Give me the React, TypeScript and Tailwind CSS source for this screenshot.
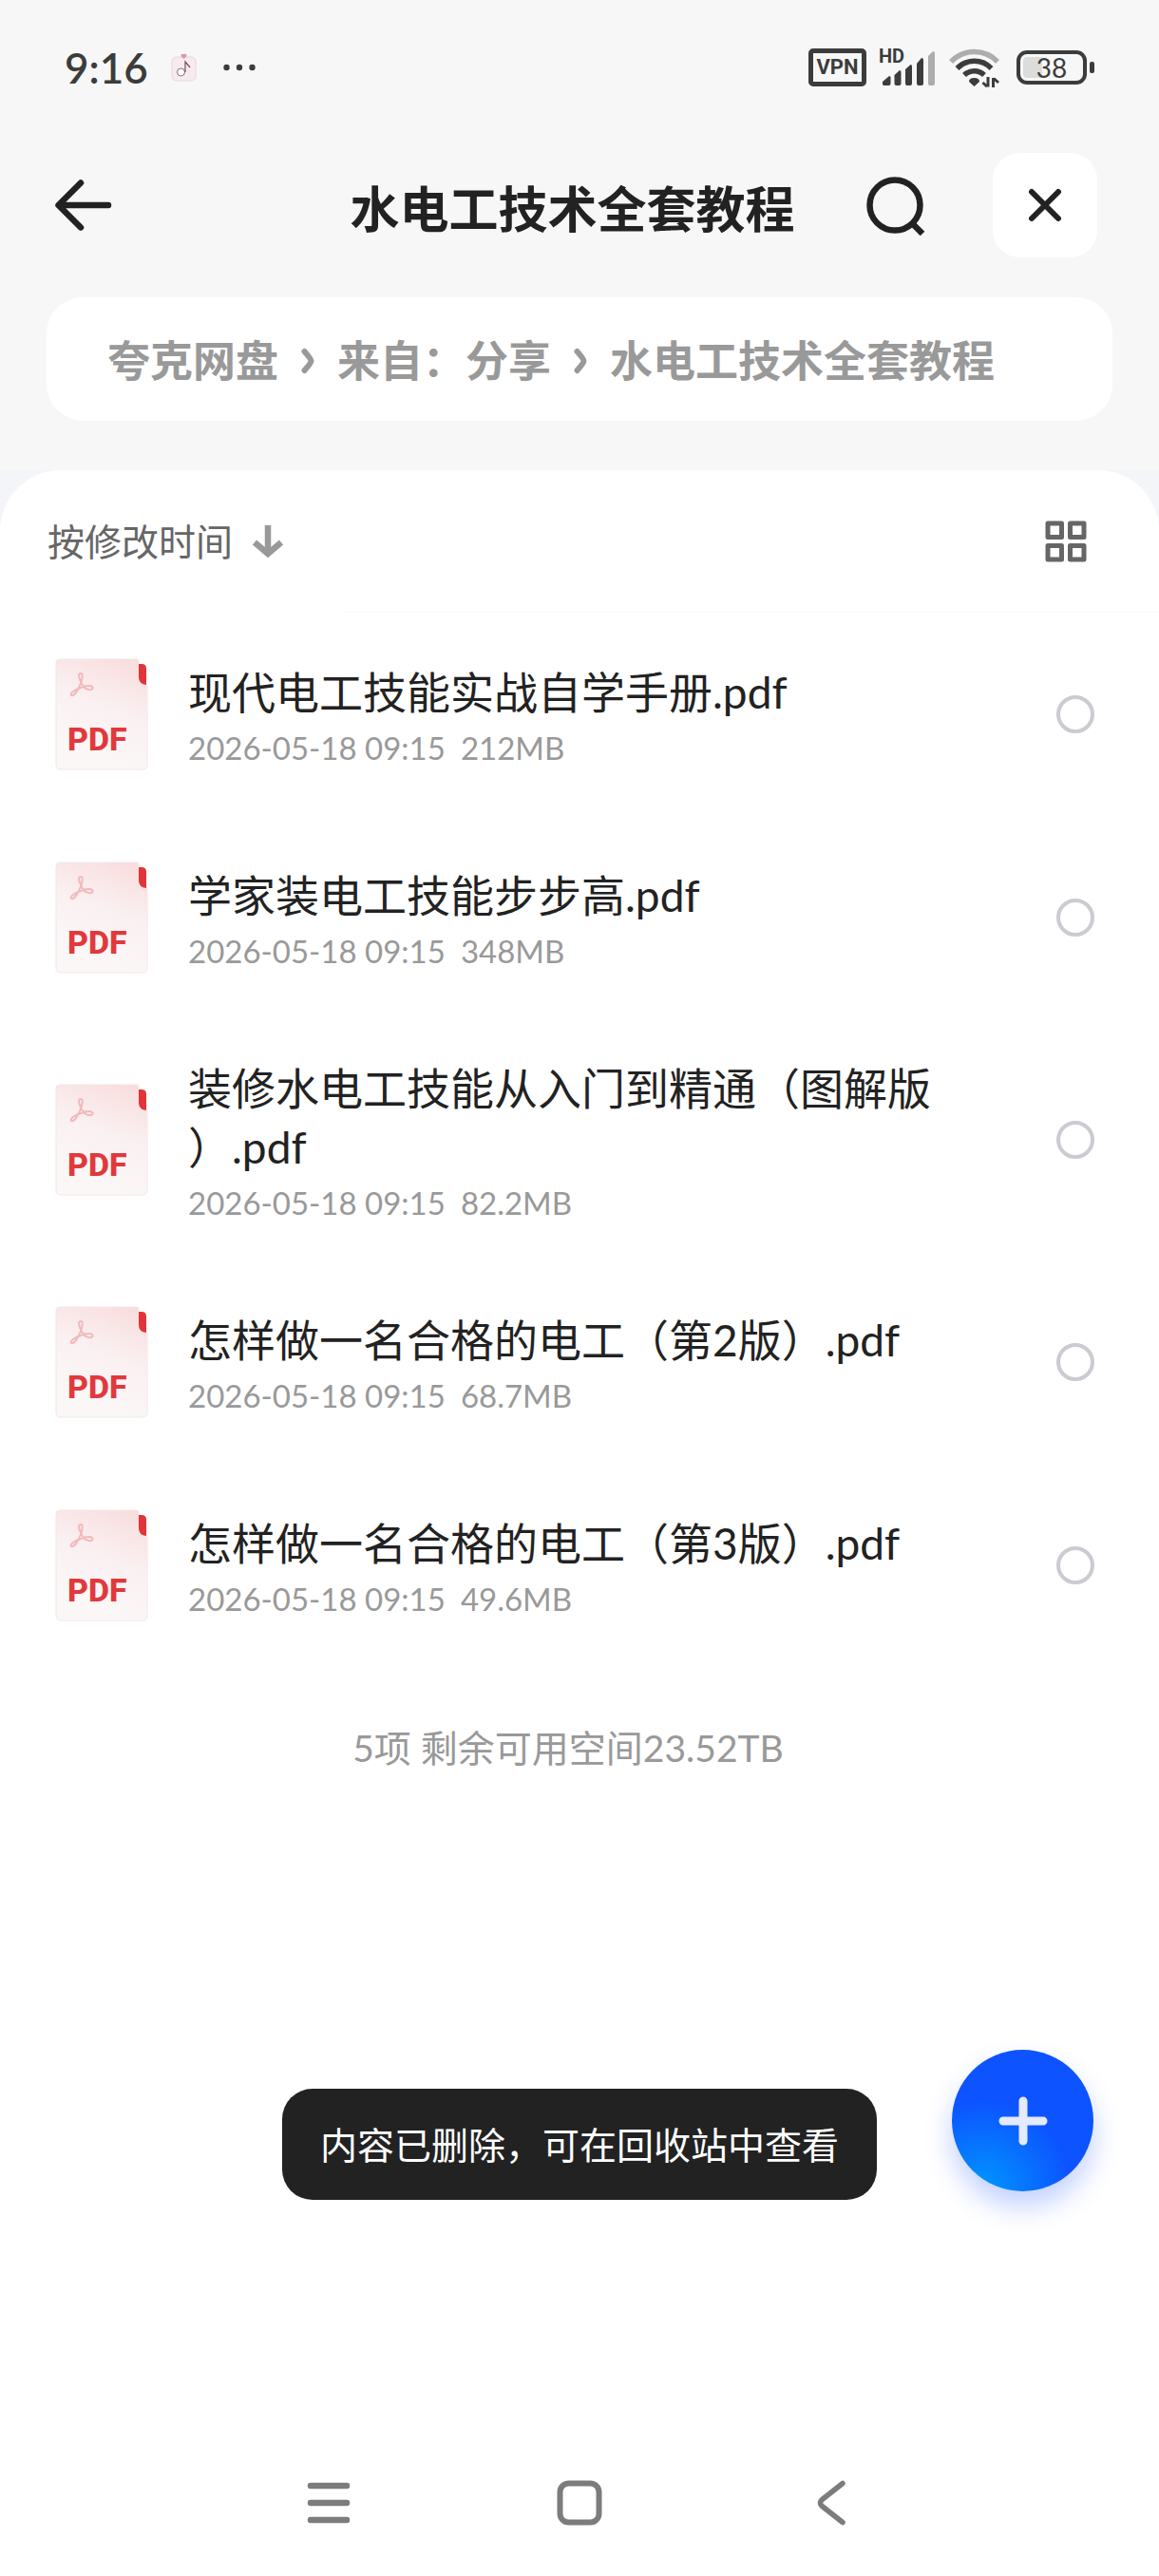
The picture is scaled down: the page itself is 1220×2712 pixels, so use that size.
import { FC } from "react";

interface FileItem {
	name: string;
	date: string;
	size: string;
}

const files: FileItem[] = [
	{ name: "现代电工技能实战自学手册.pdf", date: "2026-05-18 09:15", size: "212MB" },
	{ name: "学家装电工技能步步高.pdf", date: "2026-05-18 09:15", size: "348MB" },
	{ name: "装修水电工技能从入门到精通（图解版）.pdf", date: "2026-05-18 09:15", size: "82.2MB" },
	{ name: "怎样做一名合格的电工（第2版）.pdf", date: "2026-05-18 09:15", size: "68.7MB" },
	{ name: "怎样做一名合格的电工（第3版）.pdf", date: "2026-05-18 09:15", size: "49.6MB" },
];

const crumbs = ["夸克网盘", "来自：分享", "水电工技术全套教程"];

// Phone status bar
const StatusBar: FC = () => {
	return (
		<div className="flex h-[142px] items-center justify-between pl-[68px] pr-[68px] text-[#3c3c3c]">
			<div className="flex items-center">
				<span className="text-[44px] font-semibold leading-none">9:16</span>
				<svg width="27" height="30" viewBox="0 0 27 30" className="ml-6" aria-hidden="true">
					<rect x="1" y="4" width="25" height="25" rx="5" fill="#f8ebef" stroke="#e3d7db" strokeWidth="1" />
					<path d="M13.5 6 L10.6 3.2 A1.8 1.8 0 0 1 13.5 1.2 A1.8 1.8 0 0 1 16.4 3.2 Z" fill="#cf9bad" />
					<circle cx="10.5" cy="20" r="4" fill="#fff" stroke="#8d6b76" strokeWidth="1" />
					<path d="M15 20 V9 L20 15" fill="none" stroke="#7a4b5a" strokeWidth="1.2" />
				</svg>
				<svg width="34" height="8" viewBox="0 0 34 8" className="ml-7" fill="currentColor" aria-hidden="true">
					<circle cx="3.5" cy="4" r="3.2" />
					<circle cx="17" cy="4" r="3.2" />
					<circle cx="30.5" cy="4" r="3.2" />
				</svg>
			</div>
			<div className="flex items-center">
				<span className="flex h-10 w-[61px] items-center justify-center rounded-[5px] border-5 border-[#3c3c3c] font-[Roboto] text-[22px] font-bold leading-none">
					VPN
				</span>
				<svg width="62" height="56" viewBox="0 -8 62 56" className="ml-3" fill="currentColor" aria-hidden="true">
					<text x="1" y="15" fontSize="20" fontWeight="700" fontFamily="Roboto, sans-serif">
						HD
					</text>
					<path d="M5 35 L12 29 Q13.500 29 13.500 30.500 V37 Q13.500 39 11.500 39 H6.500 Q5 39 5 37 Z" />
					<path d="M17.500 28 L23 23 Q24.500 23 24.500 25 V37 Q24.500 39 22.500 39 H19.500 Q17.500 39 17.500 37 Z" />
					<path d="M29 22 L34.500 17 Q36 17 36 19 V37 Q36 39 34 39 H31 Q29 39 29 37 Z" />
					<path d="M41 16 L46 10 Q48 10 48 12 V37 Q48 39 46 39 H43 Q41 39 41 37 Z" />
					<path d="M53 8 L58 3 Q60 3 60 5 V37 Q60 39 58 39 H55 Q53 39 53 37 Z" fill="#adadad" />
				</svg>
				<svg width="56" height="42" viewBox="0 0 56 42" className="ml-3" fill="none" strokeWidth="5.500" aria-hidden="true">
					<path d="M3 15 A34 34 0 0 1 52 15" stroke="#adadad" />
					<path d="M9.500 22 A25 25 0 0 1 45.500 22" stroke="#3c3c3c" />
					<path d="M17 29 A15 15 0 0 1 38 29" stroke="#3c3c3c" />
					<path d="M27.500 41 L22 36 Q22 32 27.500 32 Q33 32 33 36 Z" fill="#3c3c3c" />
					<path d="M42 31 V41.500 M36.500 37 L41 41" stroke="#3c3c3c" strokeWidth="3" />
					<path d="M47.500 42 V32 M48 32.500 L53 37" stroke="#3c3c3c" strokeWidth="3" />
				</svg>
				<div className="ml-4 flex h-9 w-[74px] items-center justify-center rounded-[11px] border-4 border-[#3c3c3c] bg-linear-to-r from-[#dcdcdc] from-35% to-transparent to-35% bg-clip-content p-[3px]">
					<span className="text-[28px] leading-none">38</span>
				</div>
				<span className="ml-[3px] h-3 w-[5px] rounded-xs bg-[#3c3c3c]" />
			</div>
		</div>
	);
};

// Red "PDF" sheet shown before each file
const PdfIcon: FC = () => {
	return (
		<svg width="98" height="118" viewBox="0 0 98 118" className="shrink-0" aria-hidden="true">
			<defs>
				<linearGradient id="sheet" x1="0.8" y1="0" x2="0.5" y2="0.9">
					<stop offset="0" stopColor="#f9dddd" />
					<stop offset="0.5" stopColor="#faf0f1" />
					<stop offset="1" stopColor="#fbf7f7" />
				</linearGradient>
			</defs>
			<path
				d="M5 1 H86 Q88 1 88 3 V18 Q88 27 97 28 V112 Q97 117 92 117 H6 Q1 117 1 112 V5 Q1 1 5 1 Z"
				fill="url(#sheet)"
				stroke="#f3e6e7"
				strokeWidth="1"
			/>
			<path d="M88 6 H91 Q96 6 96 11 V28 Q88 27 88 20 Z" fill="#e23439" />
			<path
				d="M27 16 C23 16 26 23 28 27 C32 34 38 34 39.500 32 C41 28 32 28.500 27 31 C21 33 15 37 17 39 C20 41 25 32 27.500 25 C29.500 19 29 16 27 16 Z"
				fill="none"
				stroke="#f1b9bb"
				strokeWidth="2"
			/>
			<text x="13" y="97" fill="#e0393c" fontSize="34" fontWeight="800" fontFamily="Roboto, sans-serif">
				PDF
			</text>
		</svg>
	);
};

const FileRow: FC<{ file: FileItem }> = ({ file }) => {
	return (
		<li>
			<label className="flex min-h-[214px] items-center py-[34px] pl-[58px] pr-[68px]">
				<PdfIcon />
				<div className="ml-[42px] mr-[120px] min-w-0 flex-1 pt-2">
					<p className="text-[46px] leading-[62px] text-[#222] [line-break:anywhere] [text-spacing-trim:space-all]">
						{file.name}
					</p>
					<p className="text-[33px] leading-[54px] text-[#999]">
						<span>{file.date}</span>
						<span className="ml-4">{file.size}</span>
					</p>
				</div>
				<input
					type="checkbox"
					className="size-10 shrink-0 appearance-none rounded-full border-4 border-[#cbccd1] checked:bg-[#0d53ff]"
				/>
			</label>
		</li>
	);
};

export default function App() {
	return (
		<div
			lang="zh-CN"
			className="flex min-h-screen flex-col bg-white font-[Lato,'Noto_Sans_CJK_SC',sans-serif] text-[#222]"
		>
			<header className="bg-[#f7f7f7] pb-[52px]">
				<StatusBar />
				<div className="grid h-[147px] grid-cols-[1fr_auto_1fr] items-center pl-[58px] pr-[65px]">
					<button type="button" aria-label="返回" className="justify-self-start">
						<svg width="60" height="54" viewBox="0 0 60 54" fill="none" stroke="currentColor" strokeWidth="6.500" strokeLinecap="round" strokeLinejoin="round">
							<path d="M27 3.500 L3.500 27 L27 50.500 M4 27 H56" />
						</svg>
					</button>
					<h1 className="pr-2 pt-2 text-[52px] font-bold leading-[64px]">水电工技术全套教程</h1>
					<div className="flex items-center justify-self-end">
						<button type="button" aria-label="搜索" className="mr-[70px]">
							<svg width="64" height="64" viewBox="0 0 64 64" fill="none" stroke="currentColor" strokeWidth="6.500">
								<circle cx="31" cy="32" r="26.500" />
								<path d="M49 51 L60 62" />
							</svg>
						</button>
						<button type="button" aria-label="关闭" className="flex size-[110px] items-center justify-center rounded-[28px] bg-white">
							<svg width="36" height="36" viewBox="0 0 36 36" fill="none" stroke="currentColor" strokeWidth="6" strokeLinecap="round">
								<path d="M4 4 L32 32 M32 4 L4 32" />
							</svg>
						</button>
					</div>
				</div>
				<nav aria-label="路径" className="mx-[49px] mt-6 flex h-[130px] items-center rounded-[38px] bg-white pl-16 pt-1">
					<ol className="flex items-center text-[45px] font-bold leading-[64px] text-[#999]">
						{crumbs.map((crumb, index) => (
							<li key={crumb} className="flex items-center">
								{index > 0 && (
									<svg width="14" height="28" viewBox="0 0 14 28" className="mx-6" fill="none" stroke="currentColor" strokeWidth="6" strokeLinecap="round" aria-hidden="true">
										<path d="M3.500 4 Q10.500 12 10.500 14 Q10.500 16 3.500 24" />
									</svg>
								)}
								<a href="#">{crumb}</a>
							</li>
						))}
					</ol>
				</nav>
			</header>

			<main className="flex flex-1 flex-col bg-[#f3f5f8]">
				<div className="flex-1 rounded-t-[64px] bg-white pb-[154px]">
					<div className="flex h-[149px] items-center justify-between pl-[50px] pr-[76px]">
						<button type="button" className="flex items-center text-[39px] leading-[54px] text-[#666]">
							按修改时间
							<svg width="34" height="36" viewBox="0 0 34 36" className="ml-5" fill="none" stroke="#999" strokeWidth="6.500" aria-hidden="true">
								<path d="M17 1 V32 M3 19 L17 31 L31 19" />
							</svg>
						</button>
						<button type="button" aria-label="网格视图">
							<svg width="44" height="44" viewBox="0 0 44 44" fill="none" stroke="#666" strokeWidth="5" strokeLinejoin="round">
								<rect x="3" y="3" width="14.500" height="14.500" />
								<rect x="26.500" y="3" width="14.500" height="14.500" />
								<rect x="3" y="26.500" width="14.500" height="14.500" />
								<rect x="26.500" y="26.500" width="14.500" height="14.500" />
							</svg>
						</button>
					</div>
					<div className="ml-[360px] h-px bg-[#fafafa]" />
					<ul>
						{files.map((file) => (
							<FileRow key={file.name} file={file} />
						))}
					</ul>
					<p className="mt-[58px] pr-6 text-center text-[39px] leading-[54px] text-[#999]">
						5项 剩余可用空间23.52TB
					</p>
				</div>
			</main>

			{/* Toast */}
			<div
				role="status"
				className="fixed bottom-[396px] left-1/2 flex h-[117px] -translate-x-1/2 items-center whitespace-nowrap rounded-[32px] bg-[#222] px-10 text-[39px] leading-[54px] text-white"
			>
				内容已删除，可在回收站中查看
			</div>

			{/* Add button */}
			<button
				type="button"
				aria-label="新建"
				className="fixed bottom-[405px] right-[69px] flex size-[149px] items-center justify-center rounded-full bg-[radial-gradient(circle_at_22%_98%,#0095ff_0%,#0d53ff_50%)] shadow-[0_16px_28px_rgba(40,90,255,0.28)]"
			>
				<svg width="52" height="52" viewBox="0 0 52 52" fill="none" stroke="#e4eaff" strokeWidth="9" strokeLinecap="round">
					<path d="M26 5 V47 M5 26 H47" />
				</svg>
			</button>

			{/* System navigation */}
			<footer className="fixed inset-x-0 bottom-0 flex h-[154px] items-center justify-center pr-2 text-[#7c7c7c]">
				<button type="button" aria-label="最近任务">
					<svg width="46" height="48" viewBox="0 0 46 48" fill="none" stroke="currentColor" strokeWidth="6.500" strokeLinecap="round">
						<path d="M4 6 H42 M4 24 H42 M4 42 H42" />
					</svg>
				</button>
				<button type="button" aria-label="主屏幕" className="ml-[217px] mr-[226px]">
					<svg width="48" height="48" viewBox="0 0 48 48" fill="none" stroke="currentColor" strokeWidth="6">
						<rect x="3.500" y="3.500" width="41" height="41" rx="9" />
					</svg>
				</button>
				<button type="button" aria-label="后退">
					<svg width="30" height="48" viewBox="0 0 30 48" fill="none" stroke="currentColor" strokeWidth="5.500" strokeLinecap="round">
						<path d="M27 3.500 L6 20 Q1 24 6 28 L27 44.500" />
					</svg>
				</button>
			</footer>
		</div>
	);
}
